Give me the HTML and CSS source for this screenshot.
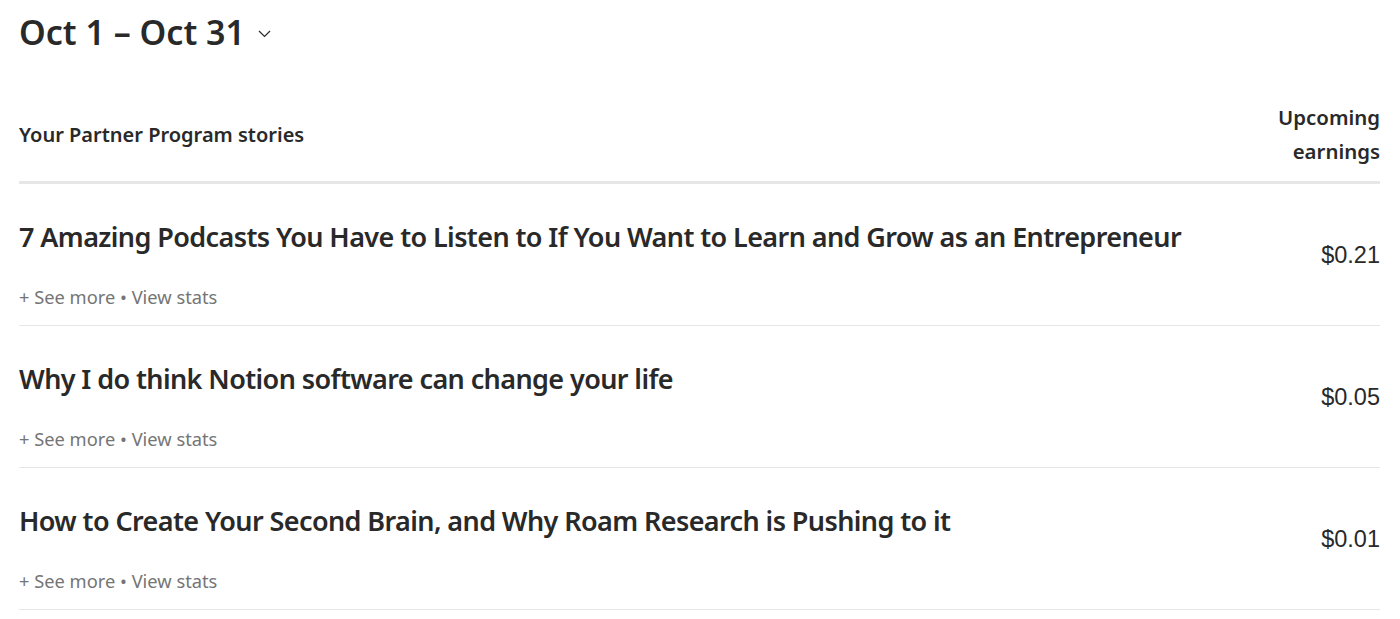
FILE: index.html
```html
<!DOCTYPE html>
<html>
<head>
<meta charset="utf-8">
<link rel="stylesheet" href="styles.css">
</head>
<body>
<div class="page">
  <div class="range">
    <h1 class="range-title">Oct 1 – Oct 31</h1>
    <svg class="chev" width="13" height="8" viewBox="0 0 13 8"><path d="M1 1l5.5 5.5L12 1" fill="none" stroke="#292929" stroke-width="1.2"/></svg>
  </div>
  <div class="table-head">
    <div class="th-left">Your Partner Program stories</div>
    <div class="th-right">Upcoming<br>earnings</div>
  </div>
  <div class="row">
    <div class="row-main">
      <div class="story-title">7 Amazing Podcasts You Have to Listen to If You Want to Learn and Grow as an Entrepreneur</div>
      <div class="meta">+ See more • View stats</div>
    </div>
    <div class="amount">$0.21</div>
  </div>
  <div class="row">
    <div class="row-main">
      <div class="story-title">Why I do think Notion software can change your life</div>
      <div class="meta">+ See more • View stats</div>
    </div>
    <div class="amount">$0.05</div>
  </div>
  <div class="row">
    <div class="row-main">
      <div class="story-title">How to Create Your Second Brain, and Why Roam Research is Pushing to it</div>
      <div class="meta">+ See more • View stats</div>
    </div>
    <div class="amount">$0.01</div>
  </div>
</div>
</body>
</html>
```
FILE: styles.css
```css
* { box-sizing: border-box; }
html, body { margin: 0; padding: 0; background: #fff; }
body { font-family: "Noto Sans", "Open Sans", sans-serif; color: #292929; }
.page { padding: 0 20px 0 19px; }
.range { display: flex; align-items: center; gap: 13px; height: 64px; }
.range-title { margin: 0; font-size: 34px; font-weight: 600; line-height: 64px; letter-spacing: 0; }
.chev { margin-top: 4px; }
.table-head { display: flex; justify-content: space-between; align-items: center; padding: 36px 0 13px; border-bottom: 3px solid #e6e6e6; }
.th-left { font-size: 20px; font-weight: 600; }
.th-right { font-size: 20.4px; font-weight: 600; text-align: right; line-height: 34px; }
.row { display: flex; justify-content: space-between; align-items: flex-start; border-bottom: 1px solid #e6e6e6; padding: 35px 0 16px; }
.story-title { font-size: 27px; font-weight: 600; line-height: 36px; letter-spacing: -0.6px; }
.meta { margin-top: 30px; font-size: 18.3px; color: #757575; line-height: 24px; }
.amount { font-family: "Liberation Sans", Arial, sans-serif; font-size: 23.5px; line-height: 24px; color: #292929; margin-top: 24px; }
```
